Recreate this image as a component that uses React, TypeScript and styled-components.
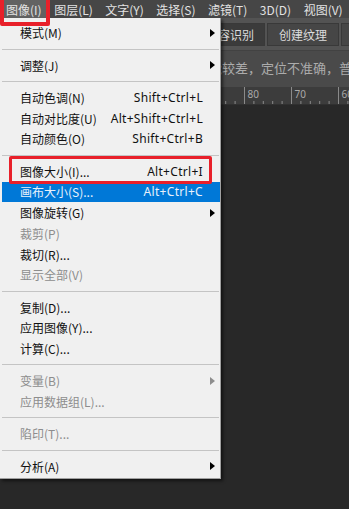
import styled, { createGlobalStyle } from 'styled-components'

const GlobalStyle = createGlobalStyle`
  html, body {
    margin: 0;
    padding: 0;
    background: #282828;
  }
  body {
    font-family: "Noto Sans CJK SC", "Noto Sans", sans-serif;
  }
`

const Screen = styled.div`
  position: relative;
  width: 349px;
  height: 509px;
  overflow: hidden;
  background: #282828;
  display: flex;
  flex-direction: column;
`
const MenuBar = styled.nav`
  display: flex;
  align-items: stretch;
  height: 18px;
  padding-left: 0;
  background: #464646;
  white-space: nowrap;
`
const MenuBarItem = styled.div<{ $active?: boolean }>`
  display: flex;
  align-items: center;
  padding: 0 6.5px 0 6px;
  font-size: 12px;
  color: #e2e2e2;
  background: ${p => (p.$active ? '#626262' : 'transparent')};
`
const OptionsBar = styled.div`
  display: flex;
  align-items: center;
  gap: 2px;
  height: 32px;
  padding: 0 0 0 195px;
  background: #535353;
  border-bottom: 1px solid #424242;
  white-space: nowrap;
`
const Segment = styled.div<{ $selected?: boolean }>`
  display: flex;
  align-items: center;
  justify-content: center;
  flex: 0 0 auto;
  width: ${p => (p.$selected ? '68px' : '70px')};
  height: 21px;
  font-size: 12px;
  color: #dcdcdc;
  background: ${p => (p.$selected ? '#3b3b3b' : '#464646')};
  border: 1px solid #393939;
`
const HintRow = styled.div`
  display: flex;
  align-items: center;
  height: 36px;
  padding: 0 0 4px 209px;
  box-sizing: border-box;
  background: #4a4a4a;
  font-size: 13px;
  color: #acacac;
  white-space: nowrap;
`
const Ruler = styled.div`
  height: 17px;
  background: #3c3c3c;
  border-bottom: 1px solid #303030;
`
const Canvas = styled.div`
  flex: 1;
  background: #282828;
`
const Dropdown = styled.div`
  position: absolute;
  left: 0;
  top: 18px;
  width: 220px;
  padding: 4.6px 0 1.4px;
  background: #f0f0f0;
  border-right: 1px solid #a0a0a0;
  border-bottom: 1px solid #a0a0a0;
  box-shadow: 2px 2px 3px rgba(0, 0, 0, 0.55);
`
const Row = styled.div<{ $disabled?: boolean; $hot?: boolean }>`
  display: flex;
  align-items: center;
  height: 20.75px;
  margin-left: 2px;
  padding-left: 18px;
  font-size: 12px;
  white-space: nowrap;
  color: ${p => (p.$hot ? '#e8f1fb' : p.$disabled ? '#8d8d8d' : '#111111')};
  background: ${p => (p.$hot ? '#0078d7' : 'transparent')};
`
const Label = styled.span`
  flex: 1;
`
const Shortcut = styled.span`
  margin-right: 17px;
  font-family: "Noto Sans", "Noto Sans CJK SC", sans-serif;
  letter-spacing: 0.3px;
`
const Arrow = styled.span<{ $disabled?: boolean }>`
  width: 0;
  height: 0;
  margin-right: 5px;
  border-top: 4.5px solid transparent;
  border-bottom: 4.5px solid transparent;
  border-left: 5px solid ${p => (p.$disabled ? '#8d8d8d' : '#000000')};
`
const Separator = styled.div`
  display: flex;
  align-items: center;
  height: 11.5px;
  margin: 0 1px 0 2px;
  &::after {
    content: '';
    flex: 1;
    height: 1px;
    background: #c4c4c4;
  }
`
const Callout = styled.div<{ $x: number; $y: number; $w: number; $h: number; $b: number }>`
  position: absolute;
  left: ${p => p.$x}px;
  top: ${p => p.$y}px;
  width: ${p => p.$w}px;
  height: ${p => p.$h}px;
  border: ${p => p.$b}px solid #e8202a;
  border-radius: 2px;
  box-sizing: border-box;
  pointer-events: none;
`

type Entry =
  | { sep: true }
  | { sep?: false; label: string; key?: string; sub?: boolean; off?: boolean; hot?: boolean }

const entries: Entry[] = [
  { label: '模式(M)', sub: true },
  { sep: true },
  { label: '调整(J)', sub: true },
  { sep: true },
  { label: '自动色调(N)', key: 'Shift+Ctrl+L' },
  { label: '自动对比度(U)', key: 'Alt+Shift+Ctrl+L' },
  { label: '自动颜色(O)', key: 'Shift+Ctrl+B' },
  { sep: true },
  { label: '图像大小(I)...', key: 'Alt+Ctrl+I' },
  { label: '画布大小(S)...', key: 'Alt+Ctrl+C', hot: true },
  { label: '图像旋转(G)', sub: true },
  { label: '裁剪(P)', off: true },
  { label: '裁切(R)...' },
  { label: '显示全部(V)', off: true },
  { sep: true },
  { label: '复制(D)...' },
  { label: '应用图像(Y)...' },
  { label: '计算(C)...' },
  { sep: true },
  { label: '变量(B)', sub: true, off: true },
  { label: '应用数据组(L)...', off: true },
  { sep: true },
  { label: '陷印(T)...', off: true },
  { sep: true },
  { label: '分析(A)', sub: true },
]

const menus = ['图像(I)', '图层(L)', '文字(Y)', '选择(S)', '滤镜(T)', '3D(D)', '视图(V)', '增效工具']

const RulerTicks = () => {
  const majors = [244.5, 291.5, 338.5]
  const labels = ['80', '70', '60']
  const minors: number[] = []
  for (let x = 197.5 - 47; x < 349; x += 9.4) minors.push(x)
  return (
    <svg width="349" height="17" style={{ display: 'block' }}>
      {minors.map((x, i) => (
        <line key={i} x1={x} x2={x} y1={14} y2={17} stroke="#8a8a8a" strokeWidth={1} />
      ))}
      {majors.map((x, i) => (
        <g key={x}>
          <line x1={x} x2={x} y1={0} y2={17} stroke="#8a8a8a" strokeWidth={1} />
          <text x={x + 3} y={11} fontSize="10" fill="#a9a9a9" fontFamily="Noto Sans, sans-serif">
            {labels[i]}
          </text>
        </g>
      ))}
    </svg>
  )
}

const App = () => {
  return (
    <Screen>
      <GlobalStyle />
      <MenuBar>
        {menus.map((m, i) => (
          <MenuBarItem key={m} $active={i === 0}>
            {m}
          </MenuBarItem>
        ))}
      </MenuBar>
      <OptionsBar>
        <Segment $selected>内容识别</Segment>
        <Segment>创建纹理</Segment>
        <Segment>近似匹配</Segment>
      </OptionsBar>
      <HintRow>能较差，定位不准确，普通选区工具</HintRow>
      <Ruler>
        <RulerTicks />
      </Ruler>
      <Canvas />
      <Dropdown>
        {entries.map((e, i) =>
          e.sep ? (
            <Separator key={i} />
          ) : (
            <Row key={i} $disabled={e.off} $hot={e.hot}>
              <Label>{e.label}</Label>
              {e.key && <Shortcut>{e.key}</Shortcut>}
              {e.sub && <Arrow $disabled={e.off} />}
            </Row>
          ),
        )}
      </Dropdown>
      <Callout $x={0} $y={-5} $w={50} $h={31} $b={4.5} />
      <Callout $x={9} $y={156} $w={203} $h={28} $b={3.5} />
    </Screen>
  )
}

export default App
